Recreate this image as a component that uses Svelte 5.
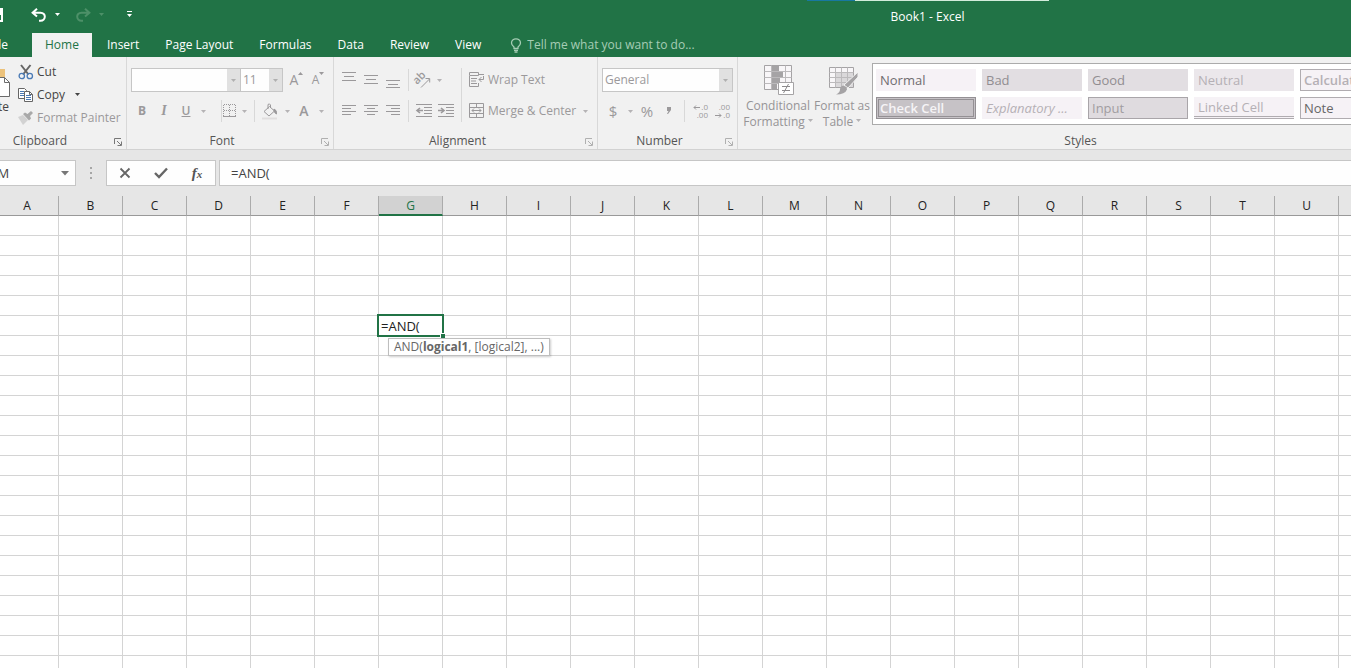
<script lang="ts">
const tabs = ['Home', 'Insert', 'Page Layout', 'Formulas', 'Data', 'Review', 'View'];
const columns = 'ABCDEFGHIJKLMNOPQRSTUV'.split('');
const rows = Array.from({ length: 23 }, (_, i) => i + 1);

const cellStyles = [
	{ name: 'Normal', kind: 'normal' },
	{ name: 'Bad', kind: 'bad' },
	{ name: 'Good', kind: 'good' },
	{ name: 'Neutral', kind: 'neutral' },
	{ name: 'Calculation', kind: 'calculation' },
	{ name: 'Check Cell', kind: 'check' },
	{ name: 'Explanatory ...', kind: 'explanatory' },
	{ name: 'Input', kind: 'input' },
	{ name: 'Linked Cell', kind: 'linked' },
	{ name: 'Note', kind: 'note' },
];

const verticalAligns = [
	{ label: 'Top Align', path: 'M1 .5h14M3 4.5h10M1 8.5h14' },
	{ label: 'Middle Align', path: 'M1 3.5h14M3 7.5h10M1 11.5h14' },
	{ label: 'Bottom Align', path: 'M1 8.5h14M3 12.5h10M1 15.5h14' },
];

const horizontalAligns = [
	{ label: 'Align Left', path: 'M1 1.5h14M1 4.5h9M1 7.5h14M1 10.5h9' },
	{ label: 'Center', path: 'M1 1.5h14M4 4.5h8M1 7.5h14M4 10.5h8' },
	{ label: 'Align Right', path: 'M1 1.5h14M6 4.5h9M1 7.5h14M6 10.5h9' },
];

let activeTab = $state('Home');
let formula = $state('=AND(');
let nameBox = $state('SUM');
let numberFormat = $state('General');
const activeColumn = 'G';
const activeRow = 6;
</script>

{#snippet caret()}
	<svg class="caret" width="5" height="3" viewBox="0 0 5 3"><path d="M0 0h5L2.5 3z" fill="currentColor" /></svg>
{/snippet}

{#snippet launcher(label: string)}
	<button class="launcher" aria-label={label}>
		<svg width="9" height="9" viewBox="0 0 9 9" fill="none" stroke="currentColor">
			<path d="M.5 6V.5H7M3 3l4 4M7.5 3.5v4h-4" />
		</svg>
	</button>
{/snippet}

<div class="app">
	<header class="title-bar">
		<div class="quick-access">
			<button class="save" aria-label="Save">
				<svg width="14" height="14" viewBox="0 0 14 14"><path d="M1 1h12v12H1zM3 1v5h8V1M4 13V9h6v4" fill="none" stroke="#fff" stroke-width="2" /></svg>
			</button>
			<button class="undo" aria-label="Undo">
				<svg width="16" height="14" viewBox="0 0 16 14" fill="none" stroke="#fff" stroke-width="2">
					<path d="M6 .8L1.600 4.800 6 8.600M2 4.800h7.500c6 0 5.500 8 0 8H8" />
				</svg>
			</button>
			<button class="drop" aria-label="Undo list">{@render caret()}</button>
			<button class="redo" aria-label="Redo" disabled>
				<svg width="16" height="14" viewBox="0 0 16 14" fill="none" stroke="#4d9068" stroke-width="2">
					<path d="M10 .8l4.400 4L10 8.600M14 4.800H6.500c-6 0-5.500 8 0 8H8" />
				</svg>
			</button>
			<button class="drop faded" aria-label="Redo list" disabled>{@render caret()}</button>
			<button class="customize" aria-label="Customize Quick Access Toolbar">
				<svg width="7" height="7" viewBox="0 0 7 7"><path d="M1 0h5v1H1zM1 3h5L3.500 6z" fill="#fff" /></svg>
			</button>
		</div>
		<div class="title">
			<div class="peek"></div>
			<h1>Book1 - Excel</h1>
		</div>
	</header>

	<nav class="tabs">
		<button class="file-tab">File</button>
		{#each tabs as tab}
			<button class="tab" class:active={tab === activeTab} onclick={() => (activeTab = tab)}>{tab}</button>
		{/each}
		<label class="tell-me">
			<svg width="12" height="15" viewBox="0 0 12 15" fill="none" stroke="currentColor" stroke-width="1.300">
				<path d="M4 10.500V9C2.500 7.800 1.500 6.500 1.500 5a4.500 4.200 0 0 1 9 0c0 1.500-1 2.800-2.500 4v1.500zM4 12.300h4M4.500 14h3" />
			</svg>
			<input type="text" placeholder="Tell me what you want to do..." aria-label="Tell me what you want to do" />
		</label>
	</nav>

	<div class="ribbon">
		<section class="group clipboard">
			<div class="group-body">
				<button class="paste">
					<svg width="32" height="34" viewBox="0 0 32 34">
						<path d="M2 4h24v27H2z" fill="#ecc27b" />
						<path d="M8 1h12v6H8z" fill="#6b6b6b" />
						<path d="M14.500 12.500h11l5 5v14h-16z" fill="#fff" stroke="#6b6b6b" />
						<path d="M25.500 12.500v5h5" fill="none" stroke="#6b6b6b" />
					</svg>
					<span>Paste</span>
				</button>
				<div class="stack">
					<button class="command">
						<svg width="16" height="16" viewBox="0 0 16 16" fill="none">
							<path d="M3 1l7.500 9.500M12.500 1L5 10.500" stroke="#666" stroke-width="2" />
							<circle cx="3.800" cy="12" r="2.700" stroke="#4a7ab5" stroke-width="1.300" />
							<circle cx="11.800" cy="12" r="2.700" stroke="#4a7ab5" stroke-width="1.300" />
						</svg>
						Cut
					</button>
					<button class="command">
						<svg width="16" height="16" viewBox="0 0 16 16" fill="#fff" stroke="#666">
							<path d="M.5 1.500h6l2 2v8h-8z" />
							<path d="M2 4.500h4M2 6.500h4M2 8.500h4" stroke="#4a7ab5" />
							<path d="M6.500 4.500h5l3 3v7h-8z" />
							<path d="M11.500 4.500v3h3" fill="none" />
							<path d="M8 8.500h5M8 10.500h5M8 12.500h5" stroke="#4a7ab5" />
						</svg>
						Copy
						<span class="copy-drop">{@render caret()}</span>
					</button>
					<button class="command muted" disabled>
						<svg width="16" height="16" viewBox="0 0 16 16">
							<path d="M0 7l5-2 5 5-5 5z" fill="#d2d2d2" />
							<path d="M5 4l2-1.500 2.500 1.500L13 1l2 2-3 3 1 2.500-2 2z" fill="#a9a9a9" />
						</svg>
						Format Painter
					</button>
				</div>
			</div>
			<footer><h2>Clipboard</h2>{@render launcher('Clipboard settings')}</footer>
		</section>

		<section class="group font muted">
			<div class="group-body rows">
				<div class="row">
					<label class="combo font-name"><select aria-label="Font"><option></option></select><span>{@render caret()}</span></label>
					<label class="combo font-size"><select aria-label="Font size"><option>11</option></select><span>{@render caret()}</span></label>
					<button class="tool grow" aria-label="Increase Font Size" disabled>
						<span>A</span><svg width="5" height="3" viewBox="0 0 5 3"><path d="M0 3h5L2.500 0z" fill="currentColor" /></svg>
					</button>
					<button class="tool grow small" aria-label="Decrease Font Size" disabled><span>A</span>{@render caret()}</button>
				</div>
				<div class="row">
					<button class="tool bold" disabled>B</button>
					<button class="tool italic" disabled>I</button>
					<button class="tool underline" disabled>U</button>
					<button class="drop" aria-label="Underline styles" disabled>{@render caret()}</button>
					<i class="divider after-underline"></i>
					<button class="tool narrow" aria-label="Borders" disabled>
						<svg width="14" height="14" viewBox="0 0 14 14" fill="none" stroke="currentColor">
							<path d="M.5 1v12M6.500 1v12M12.500 1v12M1 .5h12M1 6.500h12" stroke-dasharray="1 1" />
							<path d="M0 12.500h13" />
						</svg>
					</button>
					<button class="drop" aria-label="Border styles" disabled>{@render caret()}</button>
					<i class="divider"></i>
					<button class="tool" aria-label="Fill Color" disabled>
						<svg width="16" height="17" viewBox="0 0 16 17" fill="none" stroke="currentColor">
							<path d="M7.500 3.500l5 4.500-5.500 5L2 8.500zM6 6V1.500Q7.500 0 8.500 2v3" />
							<path d="M12 6q3 1 2.500 5-2-1-2.500-3z" fill="currentColor" />
							<path d="M0 14.500h15v2H0z" fill="#e0dede" stroke="none" />
						</svg>
					</button>
					<button class="drop" aria-label="Fill colors" disabled>{@render caret()}</button>
					<button class="tool font-color" aria-label="Font Color" disabled>A</button>
					<button class="drop" aria-label="Font colors" disabled>{@render caret()}</button>
				</div>
			</div>
			<footer><h2>Font</h2>{@render launcher('Font settings')}</footer>
		</section>

		<section class="group alignment muted">
			<div class="group-body">
				<div class="rows">
					<div class="row">
						{#each verticalAligns as align}
							<button class="tool" aria-label={align.label} disabled>
								<svg width="16" height="17" viewBox="0 0 16 17"><path d={align.path} stroke="currentColor" /></svg>
							</button>
						{/each}
						<i class="divider"></i>
						<button class="tool orientation" aria-label="Orientation" disabled>
							<svg width="18" height="16" viewBox="0 0 18 16" fill="none" stroke="currentColor">
								<text x="3" y="13" transform="rotate(-45 3 13)" font-size="11" font-weight="600" fill="currentColor" stroke="none">ab</text>
								<path d="M7 15.500l8.500-8.500M11.500 6.500h4.200v4" />
							</svg>
						</button>
						<button class="drop" aria-label="Orientation options" disabled>{@render caret()}</button>
					</div>
					<div class="row">
						{#each horizontalAligns as align}
							<button class="tool" aria-label={align.label} disabled>
								<svg width="16" height="14" viewBox="0 0 16 14"><path d={align.path} stroke="currentColor" /></svg>
							</button>
						{/each}
						<i class="divider"></i>
						<button class="tool" aria-label="Decrease Indent" disabled>
							<svg width="17" height="14" viewBox="0 0 17 14" stroke="currentColor" fill="none">
								<path d="M0 .5h16M8 3.500h8M8 6.500h8M8 9.500h8M0 12.500h16" />
								<path d="M7 6.500H1M4 4L1 6.500 4 9" stroke-width="1.600" />
							</svg>
						</button>
						<button class="tool" aria-label="Increase Indent" disabled>
							<svg width="17" height="14" viewBox="0 0 17 14" stroke="currentColor" fill="none">
								<path d="M0 .5h16M8 3.500h8M8 6.500h8M8 9.500h8M0 12.500h16" />
								<path d="M0 6.500h6M3 4l3 2.500L3 9" stroke-width="1.600" />
							</svg>
						</button>
					</div>
				</div>
				<i class="divider tall"></i>
				<div class="rows">
					<button class="command" disabled>
						<svg width="16" height="16" viewBox="0 0 16 16" fill="none" stroke="currentColor">
							<path d="M.5.5h9v3h-9zM.5 4v10.500h9V11M2 6.500h6M2 9h5M2 11.500h6M10 2.500h5" />
							<path d="M14.500 4v3.500H10M12.500 5L10 7.500l2.500 2.500" />
						</svg>
						Wrap Text
					</button>
					<button class="command" disabled>
						<svg width="16" height="16" viewBox="0 0 16 16" fill="none" stroke="currentColor">
							<path d="M.5.5h14v14H.5zM.5 4.500h14M.5 10.500h14M7.500.5v4M7.500 10.500v4" />
							<path d="M3 7.500h9M5 5.500l-2 2 2 2M10 5.500l2 2-2 2" />
						</svg>
						Merge &amp; Center
						<span class="merge-drop">{@render caret()}</span>
					</button>
				</div>
			</div>
			<footer><h2>Alignment</h2>{@render launcher('Alignment settings')}</footer>
		</section>

		<section class="group number muted">
			<div class="group-body rows">
				<label class="combo">
					<select aria-label="Number format" bind:value={numberFormat}><option>General</option><option>Number</option></select>
					<span>{@render caret()}</span>
				</label>
				<div class="row">
					<button class="tool symbol" disabled>$</button>
					<button class="drop" aria-label="Accounting formats" disabled>{@render caret()}</button>
					<button class="tool symbol" disabled>%</button>
					<button class="tool" aria-label="Comma Style" disabled>
						<svg width="6" height="8" viewBox="0 0 6 8"><path d="M1 0h4v3L2 7H1l1.500-3H1z" fill="currentColor" /></svg>
					</button>
					<i class="divider"></i>
					<button class="tool decimal" aria-label="Increase Decimal" disabled>
						<span>
							<svg width="7" height="5" viewBox="0 0 7 5" fill="none" stroke="currentColor"><path d="M7 2.500H1M3 .5l-2 2 2 2" /></svg>
							.0
						</span>
						<span>.00</span>
					</button>
					<button class="tool decimal" aria-label="Decrease Decimal" disabled>
						<span>.00</span>
						<span>
							<svg width="7" height="5" viewBox="0 0 7 5" fill="none" stroke="currentColor"><path d="M0 2.500h6M4 .5l2 2-2 2" /></svg>
							.0
						</span>
					</button>
				</div>
			</div>
			<footer><h2>Number</h2>{@render launcher('Number settings')}</footer>
		</section>

		<section class="group styles muted">
			<div class="group-body">
				<button class="big" disabled>
					<svg width="32" height="32" viewBox="0 0 32 32" fill="#f8f6f8" stroke="#a5a3a5">
						<path d="M2.500 2.500h27v24h-27z" />
						<path d="M2.500 8.500h27M2.500 14.500h27M2.500 20.500h27M9.500 2.500v24M23.500 2.500v24" fill="none" stroke="#bcbabc" />
						<path d="M10 3h7v5h-7zM10 9h11v5H10zM10 15h8v5h-8zM10 21h5v5h-5z" fill="#a5a3a5" stroke="none" />
						<path d="M16.500 19.500h15v12h-15z" fill="#fff" />
						<path d="M20 23.500h8M20 27.500h8M26.500 21l-5 9" stroke="#8d8b8d" fill="none" />
					</svg>
					<span>Conditional</span>
					<span class="with-drop">Formatting {@render caret()}</span>
				</button>
				<button class="big" disabled>
					<svg width="32" height="32" viewBox="0 0 32 32" fill="#f8f6f8" stroke="#bcbabc">
						<path d="M3.500 4.500h24v20h-24z" stroke="#a5a3a5" />
						<path d="M9 10h18v14H9z" fill="#dad8da" stroke="none" />
						<path d="M3.500 9.500h24M3.500 14.500h24M3.500 19.500h24M9.500 4.500v20M15.500 4.500v20M21.500 4.500v20" fill="none" />
						<path d="M32 9v5L22 25l-4-3z" fill="#a5a3a5" stroke="#f1f1f1" />
						<path d="M17 22.500q4 1 4 4-2 5-11 5 4-2 4-5 0-3 3-4z" fill="#a5a3a5" stroke="none" />
					</svg>
					<span>Format as</span>
					<span class="with-drop">Table {@render caret()}</span>
				</button>
				<div class="gallery">
					{#each cellStyles as style}
						<button class="cell-style {style.kind}">{style.name}</button>
					{/each}
				</div>
			</div>
			<footer><h2>Styles</h2></footer>
		</section>
	</div>

	<div class="formula-bar">
		<label class="name-box">
			<input type="text" aria-label="Name Box" bind:value={nameBox} />
			<svg width="8" height="5" viewBox="0 0 8 5"><path d="M0 0h8L4 4.500z" fill="#777" /></svg>
		</label>
		<svg class="grip" width="2" height="12" viewBox="0 0 2 12"><path d="M0 0h2v2H0zM0 5h2v2H0zM0 10h2v2H0z" fill="#a6a6a6" /></svg>
		<div class="formula-actions">
			<button aria-label="Cancel">
				<svg width="12" height="12" viewBox="0 0 12 12"><path d="M1.500 1.500l9 9M10.500 1.500l-9 9" stroke="#666" stroke-width="1.800" /></svg>
			</button>
			<button aria-label="Enter">
				<svg width="14" height="12" viewBox="0 0 14 12"><path d="M1 6l4 4 8-8.500" fill="none" stroke="#666" stroke-width="2.400" /></svg>
			</button>
			<button class="fx" aria-label="Insert Function">f<sub>x</sub></button>
		</div>
		<input class="formula" type="text" aria-label="Formula" bind:value={formula} />
	</div>

	<table class="sheet">
		<thead>
			<tr>
				{#each columns as column}
					<th class:selected={column === activeColumn} scope="col">{column}</th>
				{/each}
			</tr>
		</thead>
		<tbody>
			{#each rows as row}
				<tr>
					{#each columns as column}
						{#if row === activeRow && column === activeColumn}
							<td class="editing">
								<div class="editor">
									<input type="text" aria-label="Cell G6" bind:value={formula} />
									<i class="handle"></i>
								</div>
								<div class="hint" role="tooltip">AND(<b>logical1</b>, [logical2], ...)</div>
							</td>
						{:else}
							<td></td>
						{/if}
					{/each}
				</tr>
			{/each}
		</tbody>
	</table>
</div>

<style>
:global(body) {
	margin: 0;
}

.app {
	height: 100vh;
	display: flex;
	flex-direction: column;
	overflow: hidden;
	background: #fff;
	color: #444;
	font-family: "Open Sans", "Noto Sans", sans-serif;
	font-size: 12px;
	line-height: 16px;
}

button,
input,
select {
	box-sizing: border-box;
	margin: 0;
	padding: 0;
	border: 0;
	border-radius: 0;
	outline: 0;
	background: transparent;
	color: inherit;
	font: inherit;
}

svg {
	display: block;
	flex: none;
	overflow: visible;
}

h1,
h2 {
	margin: 0;
	font-size: inherit;
	font-weight: 400;
}

/* title bar */
.title-bar {
	display: flex;
	flex: none;
	height: 33px;
	background: #217346;
	color: #fff;
}

.quick-access {
	display: flex;
	align-items: center;
	flex: none;
	width: 504px;
	height: 29px;
}

.quick-access button {
	display: flex;
	justify-content: center;
}

.quick-access .save {
	justify-content: flex-end;
	width: 3px;
	overflow: hidden;
}

.quick-access .undo {
	width: 20px;
	margin-left: 26px;
}

.quick-access .drop {
	width: 16px;
}

.quick-access .redo {
	width: 20px;
	margin-left: 8px;
}

.quick-access .faded {
	color: #4d9068;
}

.quick-access .customize {
	width: 16px;
	margin-left: 12px;
}

.title {
	flex: 1;
	text-align: center;
}

.peek {
	width: 242px;
	height: 1px;
	margin: 0 auto 8px;
	background: linear-gradient(90deg, #1878a0 20%, #d3ecdc 20%);
}

/* tabs */
.tabs {
	display: flex;
	flex: none;
	height: 24px;
	background: #217346;
	color: #fff;
}

.file-tab {
	display: flex;
	align-items: center;
	justify-content: flex-end;
	width: 8px;
	margin-right: 24px;
	overflow: hidden;
}

.tab {
	padding: 0 13px;
}

.tab.active {
	margin-right: 2px;
	background: #f1f1f1;
	color: #217346;
}

.tell-me {
	display: flex;
	align-items: center;
	gap: 5px;
	margin-left: 16px;
	color: #a6cdb5;
}

.tell-me input {
	width: 200px;
}

.tell-me input::placeholder {
	color: inherit;
	opacity: 1;
}

/* ribbon */
.ribbon {
	display: flex;
	flex: none;
	overflow: hidden;
	border-bottom: 1px solid #d2d2d2;
	background: #f1f1f1;
}

.group {
	box-sizing: border-box;
	display: flex;
	flex-direction: column;
	flex: none;
	border-right: 1px solid #d8d8d8;
}

.group-body {
	box-sizing: border-box;
	display: flex;
	height: 76px;
	padding: 11px 4px 0;
}

.muted {
	color: #9b999b;
}

.rows {
	display: flex;
	flex-direction: column;
	gap: 7px;
}

.row {
	display: flex;
	align-items: center;
	height: 24px;
}

.group footer {
	display: flex;
	align-items: center;
	height: 16px;
	color: #555;
}

.group h2 {
	flex: 1;
	line-height: 18px;
	text-align: center;
}

.launcher {
	width: 9px;
	margin: 2px 3px 0 -12px;
	color: #777;
}

.muted .launcher {
	color: #b0b0b0;
}

.clipboard {
	width: 127px;
}

.clipboard h2 {
	padding-right: 46px;
}

.clipboard .group-body {
	gap: 7px;
	padding: 3px 0 0;
}

.paste {
	display: flex;
	flex-direction: column;
	align-items: flex-end;
	justify-content: flex-start;
	width: 11px;
	padding-top: 5px;
	overflow: hidden;
}

.paste span {
	padding-right: 2px;
}

.stack {
	display: flex;
	flex-direction: column;
}

.command {
	display: flex;
	align-items: center;
	gap: 3px;
	height: 24px;
	white-space: nowrap;
}

.stack .command {
	height: 23px;
}

.copy-drop {
	padding-left: 7px;
}

.merge-drop {
	padding-left: 4px;
	color: #b5b3b5;
}

.font {
	width: 207px;
}

.font h2,
.alignment h2,
.number h2 {
	padding-right: 16px;
}

.alignment {
	width: 264px;
}

.number {
	width: 140px;
}

.combo {
	box-sizing: border-box;
	display: flex;
	height: 24px;
	border: 1px solid #c6c6c6;
	background: #fefefe;
}

.combo select {
	flex: 1;
	min-width: 0;
	padding-left: 2px;
	appearance: none;
}

.combo span {
	display: flex;
	align-items: center;
	justify-content: center;
	width: 13px;
	background: #e1e1e1;
	color: #b0b0b0;
	pointer-events: none;
}

.font-name {
	width: 111px;
}

.font-size {
	width: 44px;
	margin-left: -1px;
	margin-right: 2px;
}

.tool {
	display: flex;
	align-items: center;
	justify-content: center;
	width: 22px;
	height: 24px;
}

.tool.narrow {
	width: 16px;
}

.tool.grow {
	align-items: flex-start;
	padding-top: 4px;
	font-size: 14px;
}

.tool.small {
	font-size: 12px;
}

.bold {
	font-weight: 700;
}

.italic {
	font-family: "Liberation Serif", serif;
	font-size: 14px;
	font-style: italic;
	font-weight: 700;
}

.underline {
	font-weight: 600;
	text-decoration: underline;
}

.font-color {
	font-size: 14px;
	font-weight: 600;
}

.symbol {
	font-size: 15px;
}

.tool.decimal {
	flex-direction: column;
	align-items: flex-end;
	justify-content: center;
	padding-right: 3px;
	font-size: 8px;
	line-height: 8px;
}

.decimal span {
	display: flex;
	align-items: center;
	gap: 1px;
}

.row .drop {
	display: flex;
	align-items: center;
	justify-content: center;
	width: 12px;
	height: 24px;
	color: #b5b3b5;
}

.tool.orientation {
	width: 20px;
}

.divider {
	width: 1px;
	height: 22px;
	margin: 0 4px;
	background: #d8d8d8;
}

.divider.after-underline {
	margin: 0 0 0 12px;
}

.divider.tall {
	height: 54px;
	margin: 0 7px 0 4px;
}

.styles {
	width: 686px;
}

.styles .group-body {
	padding: 6px 0 0 4px;
}

.big {
	display: flex;
	flex-direction: column;
	align-items: center;
	width: 72px;
	color: #969496;
	white-space: nowrap;
}

.big + .big {
	width: 56px;
	margin-right: 2px;
}

.big svg:first-child {
	margin-bottom: 3px;
}

.with-drop {
	display: flex;
	align-items: center;
	gap: 3px;
}

.with-drop .caret,
.big .caret {
	color: #b5b3b5;
}

.gallery {
	box-sizing: border-box;
	display: grid;
	grid-template-columns: repeat(5, 100px);
	grid-auto-rows: 22px;
	gap: 6px;
	flex: 1;
	height: 62px;
	padding: 5px 3px;
	border: 1px solid #ababab;
	background: #fff;
}

.cell-style {
	overflow: hidden;
	padding: 0 4px;
	background: #f6f2f6;
	color: #b5b0b5;
	font-size: 13px;
	line-height: 16px;
	text-align: left;
	white-space: nowrap;
}

.cell-style.normal {
	color: #706c70;
}

.cell-style.bad,
.cell-style.good {
	background: #e2dee2;
	color: #918d91;
}

.cell-style.neutral {
	background: #ebe7eb;
}

.cell-style.calculation {
	padding: 0 3px;
	border: 1px solid #b0acb0;
	font-weight: 600;
}

.cell-style.check {
	padding: 0 1px;
	border: 3px double #949094;
	background: #c6c2c6;
	color: #f6f4f6;
	font-weight: 600;
}

.cell-style.explanatory {
	font-style: italic;
}

.cell-style.input {
	padding: 0 3px;
	border: 1px solid #a9a5a9;
	background: #dfdbdf;
	color: #a19da1;
}

.cell-style.linked {
	border-bottom: 3px double #b0acb0;
}

.cell-style.note {
	padding: 0 3px;
	border: 1px solid #b0acb0;
	color: #666;
}

/* formula bar */
.formula-bar {
	display: flex;
	align-items: center;
	flex: none;
	height: 46px;
	background: #e6e6e6;
}

.name-box,
.formula-actions,
.formula {
	box-sizing: border-box;
	height: 26px;
	border: 1px solid #c6c6c6;
	background: #fefefe;
}

.name-box {
	display: flex;
	align-items: center;
	width: 100px;
	margin-left: -24px;
	padding: 0 6px 0 4px;
	font-size: 13px;
}

.name-box input {
	flex: 1;
	min-width: 0;
}

.grip {
	margin: 0 14px;
}

.formula-actions {
	display: flex;
	width: 110px;
	margin-right: 3px;
}

.formula-actions button {
	display: flex;
	align-items: center;
	justify-content: center;
	width: 36px;
}

.formula-actions .fx {
	display: block;
	color: #555;
	font-family: "Liberation Serif", serif;
	font-size: 15px;
	font-style: italic;
	font-weight: 700;
}

.fx sub {
	font-size: 11px;
	vertical-align: baseline;
}

.formula {
	flex: 1;
	min-width: 0;
	padding-left: 11px;
	border-right: 0;
	font-size: 13px;
}

/* sheet */
.sheet {
	flex: none;
	width: 1403px;
	border-collapse: separate;
	border-spacing: 0;
	table-layout: fixed;
}

.sheet th {
	box-sizing: border-box;
	width: 64px;
	height: 20px;
	padding: 0;
	border-right: 1px solid #ababab;
	border-bottom: 1px solid #999;
	background: #e6e6e6;
	color: #222;
	font-size: 12px;
	font-weight: 400;
	line-height: 18px;
}

.sheet th:first-child {
	width: 59px;
	padding-right: 4px;
}

.sheet th.selected {
	border-bottom: 2px solid #217346;
	background: #d2d2d2;
	color: #217346;
	line-height: 17px;
}

.sheet td {
	box-sizing: border-box;
	height: 20px;
	padding: 0;
	border-right: 1px solid #d4d4d4;
	border-bottom: 1px solid #d4d4d4;
}

.sheet td.editing {
	position: relative;
}

.editor {
	position: absolute;
	inset: -2px;
	border: 2px solid #217346;
	background: #fff;
	color: #222;
}

.editor input {
	display: block;
	width: 100%;
	height: 100%;
	padding: 1px 0 0 2px;
	font-size: 13px;
}

.handle {
	position: absolute;
	right: -3px;
	bottom: -3px;
	width: 4px;
	height: 4px;
	border: 1px solid #fff;
	border-width: 1px 0 0 1px;
	background: #217346;
}

.hint {
	position: absolute;
	top: 22px;
	left: 9px;
	z-index: 1;
	padding: 0 5px 1px;
	border: 1px solid #bebebe;
	background: #fff;
	box-shadow: 1px 1px 2px #0003;
	color: #666;
	line-height: 15px;
	white-space: nowrap;
}
</style>
